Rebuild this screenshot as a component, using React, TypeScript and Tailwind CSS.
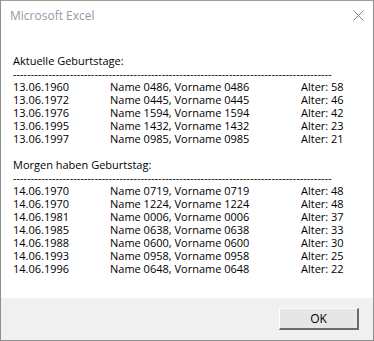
import React from "react";

type Row = { date: string; name: string; age: number };

const today: Row[] = [
  { date: "13.06.1960", name: "Name 0486, Vorname 0486", age: 58 },
  { date: "13.06.1972", name: "Name 0445, Vorname 0445", age: 46 },
  { date: "13.06.1976", name: "Name 1594, Vorname 1594", age: 42 },
  { date: "13.06.1995", name: "Name 1432, Vorname 1432", age: 23 },
  { date: "13.06.1997", name: "Name 0985, Vorname 0985", age: 21 },
];

const tomorrow: Row[] = [
  { date: "14.06.1970", name: "Name 0719, Vorname 0719", age: 48 },
  { date: "14.06.1970", name: "Name 1224, Vorname 1224", age: 48 },
  { date: "14.06.1981", name: "Name 0006, Vorname 0006", age: 37 },
  { date: "14.06.1985", name: "Name 0638, Vorname 0638", age: 33 },
  { date: "14.06.1988", name: "Name 0600, Vorname 0600", age: 30 },
  { date: "14.06.1993", name: "Name 0958, Vorname 0958", age: 25 },
  { date: "14.06.1996", name: "Name 0648, Vorname 0648", age: 22 },
];

const dashes = "-".repeat(90);

function Section({ title, rows }: { title: string; rows: Row[] }) {
  return (
    <div>
      <div className="h-[13px]">{title}</div>
      <div className="h-[13px] whitespace-nowrap">{dashes}</div>
      {rows.map((r, i) => (
        <div key={i} className="grid h-[13px] grid-cols-[97px_191px_auto] whitespace-nowrap">
          <span>{r.date}</span>
          <span>{r.name}</span>
          <span>Alter: {r.age}</span>
        </div>
      ))}
    </div>
  );
}

export default function App() {
  return (
    <div
      className="flex h-[341px] w-[374px] flex-col border border-[#8f8f8f] border-t-[#a3a08a] bg-white text-black"
      style={{ fontFamily: '"Open Sans", "Noto Sans", sans-serif' }}
    >
      <div className="flex h-[30px] items-start justify-between pl-[9px] pr-[9px] pt-[7px]">
        <span className="text-[12px] leading-[16px] text-[#9a9a9a]">Microsoft Excel</span>
        <svg width="11" height="11" viewBox="0 0 11 11" className="mt-[2px]">
          <path d="M0.5 0.5 L10.5 10.5 M10.5 0.5 L0.5 10.5" stroke="#808080" strokeWidth="1" />
        </svg>
      </div>

      <div className="flex flex-1 flex-col gap-[13px] pl-[12px] pt-[23px] text-[11px] leading-[13px]">
        <Section title="Aktuelle Geburtstage:" rows={today} />
        <Section title="Morgen haben Geburtstag:" rows={tomorrow} />
      </div>

      <div className="flex h-[42px] items-start justify-end bg-[#f0f0f0] pr-[14px] pt-[10px]">
        <button className="h-[22px] w-[80px] border-b-2 border-l border-r-2 border-t border-b-[#6a6a6a] border-l-[#fdfdfd] border-r-[#6a6a6a] border-t-[#fdfdfd] bg-[#e6e6e6] text-[12px] leading-[16px] text-black">
          OK
        </button>
      </div>
    </div>
  );
}
